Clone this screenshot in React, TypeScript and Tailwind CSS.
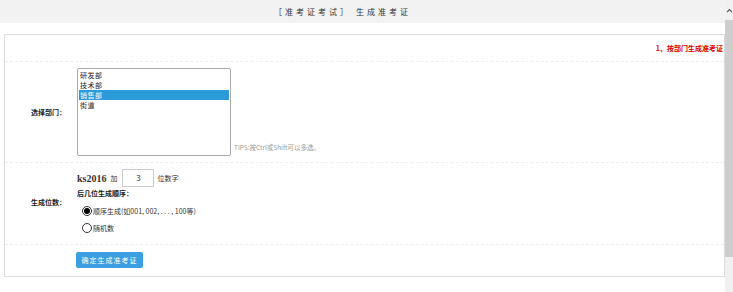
const cjk = "font-['Noto_Sans_CJK_SC','Noto_Sans',sans-serif]";

const DEPARTMENTS = ["研发部", "技术部", "销售部", "街道"];

function Radio({ checked = false }: { checked?: boolean }) {
  return (
    <span className="flex h-[10px] w-[10px] items-center justify-center rounded-full border border-[#333] bg-white">
      {checked ? <span className="h-[6px] w-[6px] rounded-full bg-black" /> : null}
    </span>
  );
}

function Scrollbar() {
  return (
    <div className="flex w-[8px] flex-col bg-[#f0f0f0]">
      <div className="flex h-[20px] items-center justify-center">
        <svg viewBox="0 0 8 6" className="h-[5px] w-[7px]" fill="none" stroke="#555" strokeWidth="1.4">
          <path d="M1 5 4 2l3 3" />
        </svg>
      </div>
      <div className="h-[237px] bg-[#cdcdcd]" />
    </div>
  );
}

export default function App() {
  return (
    <div className={`flex h-[292px] w-[733px] overflow-hidden bg-white text-[7px] text-[#333] ${cjk}`}>
      <div className="flex flex-1 flex-col">
        <div className="flex h-[23px] items-center justify-center bg-[#f2f2f2] pr-[40px] text-[8px] tracking-[3px] text-[#333]">
          ［准考证考试］ 生成准考证
        </div>

        <div className="ml-[4px] mt-[11px] border border-[#dcdcdc]">
          <div className="flex h-[27px] items-center justify-end border-b border-dashed border-[#eeeeee] pr-[1px] font-bold text-[#e00000]">
            1、按部门生成准考证
          </div>

          <div className="flex border-b border-dashed border-[#eeeeee] py-[6px]">
            <div className="flex w-[72px] items-center justify-end pr-[11px] font-bold text-[#222]">
              选择部门：
            </div>
            <div className="flex items-end gap-[3px]">
              <div className="h-[88px] w-[154px] rounded-[2px] border border-[#aaa] bg-white pt-[1px]">
                {DEPARTMENTS.map((name) => (
                  <div
                    key={name}
                    className={
                      name === "销售部"
                        ? "mx-[1px] h-[10px] bg-[#2b9ad8] pl-[1px] leading-[10px] tracking-[0.5px] text-white"
                        : "mx-[1px] h-[10px] pl-[1px] leading-[10px] tracking-[0.5px] text-[#222]"
                    }
                  >
                    {name}
                  </div>
                ))}
              </div>
              <div className="mb-[3px] text-[6.5px] text-[#999]">TIPS:按Ctrl或Shift可以多选。</div>
            </div>
          </div>

          <div className="flex border-b border-dashed border-[#eeeeee] pb-[8px] pt-[6px]">
            <div className="flex w-[72px] items-center justify-end pr-[11px] font-bold text-[#222]">
              生成位数：
            </div>
            <div className="flex flex-col">
              <div className="flex h-[18px] items-center">
                <span className="font-['Liberation_Serif',serif] text-[10px] font-bold text-[#333]">ks2016</span>
                <span className="ml-[4px]">加</span>
                <span className="ml-[5px] flex h-[18px] w-[32px] items-center justify-center border border-[#ccc] text-[8px]">
                  3
                </span>
                <span className="ml-[3px]">位数字</span>
              </div>
              <div className="flex h-[12px] items-center font-bold text-[#222]">后几位生成顺序：</div>
              <div className="mt-[4px] flex h-[16px] items-center pl-[5px]">
                <Radio checked />
                <span className="ml-[1px]">顺序生成(如001, 002, . . . , 100等)</span>
              </div>
              <div className="mt-[1px] flex h-[16px] items-center pl-[5px]">
                <Radio />
                <span className="ml-[1px]">随机数</span>
              </div>
            </div>
          </div>

          <div className="flex pb-[8px] pl-[71px] pt-[7px]">
            <button
              type="button"
              className="flex h-[16px] w-[67px] items-center justify-center rounded-[2px] bg-[#3a9ee0] text-[7px] tracking-[1px] text-white"
            >
              确定生成准考证
            </button>
          </div>
        </div>
      </div>
      <Scrollbar />
    </div>
  );
}
